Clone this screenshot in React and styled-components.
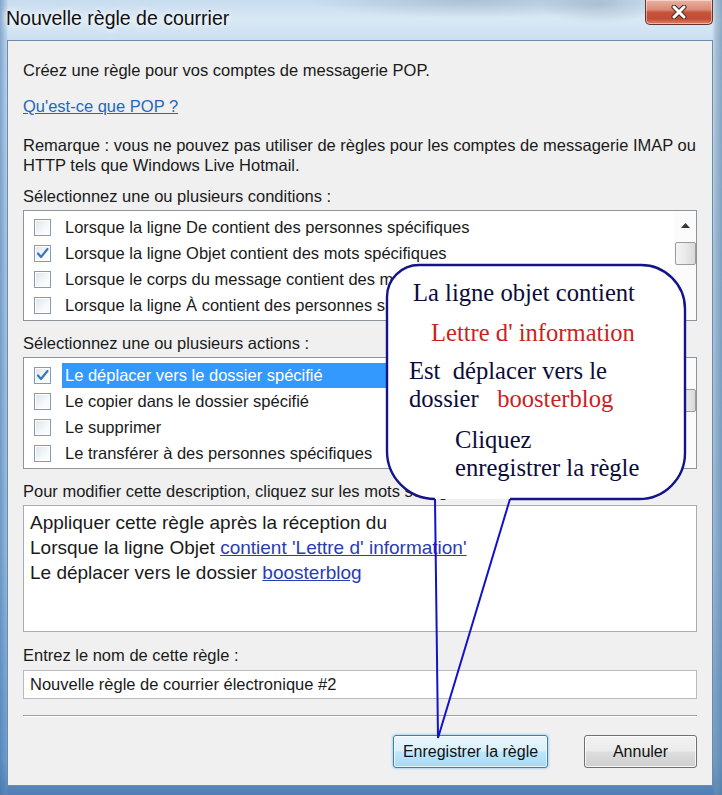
import React from 'react';
import styled, { createGlobalStyle } from 'styled-components';

const Global = createGlobalStyle`
  html, body { margin: 0; padding: 0; }
  body {
    width: 722px; height: 795px; overflow: hidden;
    font-family: "Liberation Sans", Arial, sans-serif;
  }
`;

const Window = styled.div`
  position: relative;
  width: 722px;
  height: 795px;
  display: flex;
  flex-direction: column;
  overflow: hidden;
  background:
    radial-gradient(ellipse 160px 18px at 470px 0px, rgba(120,140,160,0.35), rgba(120,140,160,0) 100%),
    radial-gradient(ellipse 60px 20px at 600px 4px, rgba(90,110,130,0.25), rgba(90,110,130,0) 100%),
    linear-gradient(90deg, rgba(70,120,175,0.55) 0px, rgba(120,165,210,0.2) 7px, rgba(0,0,0,0) 8px, rgba(0,0,0,0) 712px, rgba(120,150,175,0.45) 716px, rgba(90,130,170,0.6) 722px),
    linear-gradient(180deg, #c7dcef 0px, #d9e8f5 20px, #cbdff1 40px, #b3cfe8 250px, #9bbfe0 550px, #6d9acb 760px, #4f7fb4 795px);
`;

const TitleBar = styled.div`
  height: 40px;
  flex: none;
  display: flex;
  align-items: flex-start;
  padding-left: 6px;
`;

const Title = styled.div`
  margin-top: 7px;
  font-size: 19.5px;
  color: #101010;
  text-shadow: 0 0 6px rgba(255,255,255,0.95), 0 0 10px rgba(255,255,255,0.8);
`;

const CloseButton = styled.div`
  margin-left: auto;
  margin-right: 9px;
  width: 68px;
  height: 25px;
  box-sizing: border-box;
  border: 1px solid #6a3328;
  border-top: none;
  border-radius: 0 0 5px 5px;
  background: linear-gradient(180deg, #ebb2a2 0%, #da8a76 40%, #c5533a 52%, #c24c35 78%, #da8464 100%);
  box-shadow: inset 0 0 0 1px rgba(255,255,255,0.45);
  display: flex;
  align-items: center;
  justify-content: center;
`;

const Client = styled.div`
  flex: 1;
  margin: 0 9px 9px 7px;
  border: 1px solid #6f8aa6;
  background: #f0f0f0;
  padding: 20px 15px 0 15px;
  display: flex;
  flex-direction: column;
  font-size: 16.5px;
  color: #1a1a1a;
`;

const Text = styled.div`
  margin-top: ${p => p.mt || 0}px;
  line-height: ${p => p.lh || 18}px;
  white-space: nowrap;
`;

const Link = styled.span`
  color: #2468b8;
  text-decoration: underline;
`;

const List = styled.div`
  margin-top: ${p => p.mt}px;
  height: ${p => p.h}px;
  box-sizing: border-box;
  background: #fff;
  border: 1px solid #8e949c;
  display: flex;
  overflow: hidden;
`;

const Rows = styled.div`
  flex: 1;
  min-width: 0;
  padding-top: ${p => p.pt}px;
  display: flex;
  flex-direction: column;
`;

const Row = styled.div`
  height: 26px;
  display: flex;
  align-items: center;
  padding-left: 10px;
`;

const CheckBox = styled.span`
  width: 17px;
  height: 17px;
  box-sizing: border-box;
  border: 1px solid #7f9db9;
  background: linear-gradient(135deg, #dde4ea 0%, #f6f8fa 60%, #ffffff 100%);
  box-shadow: inset 0 0 0 1px #fff;
  display: flex;
  align-items: center;
  justify-content: center;
  flex: none;
`;

const RowLabel = styled.span`
  margin-left: 11px;
  padding: 0 3px;
  height: 25px;
  display: flex;
  align-items: center;
  white-space: nowrap;
  flex: ${p => (p.selected ? 1 : 'none')};
  background: ${p => (p.selected ? '#3399ff' : 'transparent')};
  color: ${p => (p.selected ? '#ffffff' : '#1a1a1a')};
`;

const ScrollBar = styled.div`
  width: 22px;
  flex: none;
  background: #fbfbfb;
  display: flex;
  flex-direction: column;
  align-items: center;
`;

const ArrowCell = styled.div`
  height: 28px;
  width: 100%;
  flex: none;
  display: flex;
  align-items: center;
  justify-content: center;
`;

const Thumb = styled.div`
  width: 21px;
  height: 23px;
  margin-top: ${p => p.mt}px;
  box-sizing: border-box;
  border: 1px solid #9b9b9b;
  border-radius: 2px;
  background: linear-gradient(90deg, #f4f4f4 0%, #e9e9e9 50%, #d9d9d9 100%);
`;

const DescBox = styled.div`
  margin-top: 5px;
  height: 127px;
  box-sizing: border-box;
  background: #fff;
  border: 1px solid #a9acb2;
  padding: 4px 6px;
  font-size: 19px;
  line-height: 25px;
  color: #1a1a1a;
`;

const DescLink = styled.span`
  color: #2a3cb4;
  text-decoration: underline;
`;

const Input = styled.div`
  margin-top: 6px;
  height: 29px;
  box-sizing: border-box;
  background: #fff;
  border: 1px solid #b8bcc2;
  padding-left: 6px;
  display: flex;
  align-items: center;
  white-space: nowrap;
`;

const Separator = styled.div`
  margin-top: 16px;
  height: 0;
  border-top: 1px solid #a0a0a0;
  border-bottom: 1px solid #ffffff;
`;

const ButtonRow = styled.div`
  margin-top: 18px;
  display: flex;
  justify-content: flex-end;
  gap: 36px;
`;

const Button = styled.div`
  width: ${p => p.w}px;
  height: 33px;
  box-sizing: border-box;
  border-radius: 3px;
  display: flex;
  align-items: center;
  justify-content: center;
  font-size: 16px;
  color: #111;
  white-space: nowrap;
  border: 1px solid ${p => (p.primary ? '#3c7fb1' : '#707070')};
  background: ${p =>
    p.primary
      ? 'linear-gradient(180deg, #eaf6fd 0%, #d9f0fc 48%, #bee6fd 52%, #a7d9f5 100%)'
      : 'linear-gradient(180deg, #f2f2f2 0%, #ebebeb 48%, #dddddd 52%, #cfcfcf 100%)'};
  box-shadow: ${p =>
    p.primary
      ? 'inset 0 0 0 1px rgba(255,255,255,0.7), 0 0 3px rgba(80,170,230,0.8)'
      : 'inset 0 0 0 1px rgba(255,255,255,0.8)'};
`;

/* Callout annotation lying over the dialog */
const Callout = styled.div`
  position: absolute;
  left: 385px;
  top: 263px;
  width: 306px;
  height: 480px;
  z-index: 10;
  pointer-events: none;
`;

const CalloutSvg = styled.svg`
  position: absolute;
  left: 0;
  top: 0;
`;

const CalloutText = styled.div`
  position: relative;
  display: flex;
  flex-direction: column;
  padding-top: 16px;
  font-family: "Liberation Serif", "Times New Roman", serif;
  font-size: 24.6px;
  line-height: 28px;
  color: #0c0c3a;
`;

const CLine = styled.div`
  margin-top: ${p => p.mt || 0}px;
  padding-left: ${p => p.indent}px;
  white-space: pre;
`;

const Red = styled.span`
  color: #cc1f1f;
`;

function Check() {
  return (
    <svg width="13" height="13" viewBox="0 0 13 13">
      <path d="M2 6.5 L5 10 L11.5 2" fill="none" stroke="#3a78b8" strokeWidth="2.2" strokeLinecap="round" strokeLinejoin="round" />
    </svg>
  );
}

function UpArrow() {
  return (
    <svg width="9" height="5" viewBox="0 0 9 5">
      <path d="M0 5 L4.5 0 L9 5 Z" fill="#333" />
    </svg>
  );
}

function CheckRow({ checked, selected, children }) {
  return (
    <Row>
      <CheckBox>{checked && <Check />}</CheckBox>
      <RowLabel selected={selected}>{children}</RowLabel>
    </Row>
  );
}

export default function App() {
  return (
    <>
      <Global />
      <Window>
        <TitleBar>
          <Title>Nouvelle règle de courrier</Title>
          <CloseButton>
            <svg width="16" height="14" viewBox="0 0 16 14">
              <path d="M3 2 L13 12 M13 2 L3 12" stroke="#4a2a25" strokeWidth="5" strokeLinecap="round" />
              <path d="M3 2 L13 12 M13 2 L3 12" stroke="#ffffff" strokeWidth="3" strokeLinecap="round" />
            </svg>
          </CloseButton>
        </TitleBar>
        <Client>
          <Text>Créez une règle pour vos comptes de messagerie POP.</Text>
          <Text mt={18}><Link>Qu'est-ce que POP ?</Link></Text>
          <Text mt={20} lh={20}>
            Remarque : vous ne pouvez pas utiliser de règles pour les comptes de messagerie IMAP ou<br />
            HTTP tels que Windows Live Hotmail.
          </Text>
          <Text mt={12}>Sélectionnez une ou plusieurs conditions :</Text>
          <List mt={5} h={111}>
            <Rows pt={3}>
              <CheckRow>Lorsque la ligne De contient des personnes spécifiques</CheckRow>
              <CheckRow checked>Lorsque la ligne Objet contient des mots spécifiques</CheckRow>
              <CheckRow>Lorsque le corps du message contient des mots spécifiques</CheckRow>
              <CheckRow>Lorsque la ligne À contient des personnes spécifiques</CheckRow>
            </Rows>
            <ScrollBar>
              <ArrowCell><UpArrow /></ArrowCell>
              <Thumb mt={3} />
            </ScrollBar>
          </List>
          <Text mt={13}>Sélectionnez une ou plusieurs actions :</Text>
          <List mt={5} h={112}>
            <Rows pt={4}>
              <CheckRow checked selected>Le déplacer vers le dossier spécifié</CheckRow>
              <CheckRow>Le copier dans le dossier spécifié</CheckRow>
              <CheckRow>Le supprimer</CheckRow>
              <CheckRow>Le transférer à des personnes spécifiques</CheckRow>
            </Rows>
            <ScrollBar>
              <ArrowCell />
              <Thumb mt={3} />
            </ScrollBar>
          </List>
          <Text mt={13}>Pour modifier cette description, cliquez sur les mots soulignés.</Text>
          <DescBox>
            <div>Appliquer cette règle après la réception du</div>
            <div>Lorsque la ligne Objet <DescLink>contient 'Lettre d' information'</DescLink></div>
            <div>Le déplacer vers le dossier <DescLink>boosterblog</DescLink></div>
          </DescBox>
          <Text mt={14}>Entrez le nom de cette règle :</Text>
          <Input>Nouvelle règle de courrier électronique #2</Input>
          <Separator />
          <ButtonRow>
            <Button primary w={155}>Enregistrer la règle</Button>
            <Button w={113}>Annuler</Button>
          </ButtonRow>
        </Client>

        <Callout>
          <CalloutSvg width="306" height="480" viewBox="0 0 306 480">
            <path d="M50 236 L125 236 L254 236 A46 46 0 0 0 300 190 L300 46 A44 44 0 0 0 256 2 L34 2 A32 32 0 0 0 2 34 L2 188 A48 48 0 0 0 50 236 Z" fill="#ffffff" />
            <path d="M125 236 L254 236 A46 46 0 0 0 300 190 L300 46 A44 44 0 0 0 256 2 L34 2 A32 32 0 0 0 2 34 L2 188 A48 48 0 0 0 50 236" fill="none" stroke="#14148a" strokeWidth="2.4" />
            <path d="M50 236 L53 475 L125 236" fill="none" stroke="#1212c8" strokeWidth="2" strokeLinejoin="miter" />
          </CalloutSvg>
          <CalloutText>
            <CLine indent={28}>La ligne objet contient</CLine>
            <CLine indent={46} mt={12}><Red>Lettre d' information</Red></CLine>
            <CLine indent={24} mt={10}>Est  déplacer vers le</CLine>
            <CLine indent={24}>dossier   <Red>boosterblog</Red></CLine>
            <CLine indent={70} mt={13}>Cliquez</CLine>
            <CLine indent={70}>enregistrer la règle</CLine>
          </CalloutText>
        </Callout>
      </Window>
    </>
  );
}
